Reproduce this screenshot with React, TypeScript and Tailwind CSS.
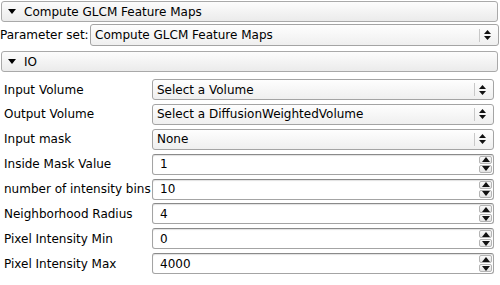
import React from "react";

const font = { fontFamily: '"DejaVu Sans", Verdana, sans-serif' };

function Caret() {
  return (
    <svg width="8" height="5" viewBox="0 0 8 5" className="shrink-0">
      <path d="M0 0 H8 L4 5 Z" fill="#000" />
    </svg>
  );
}

function Header({ title }: { title: string }) {
  return (
    <div className="h-[21px] flex items-center rounded-[3px] border border-[#a9a9a9] bg-gradient-to-b from-[#fcfcfc] to-[#ebebeb] pl-[6px] gap-[8px]">
      <Caret />
      <span className="text-[12px] text-black leading-none">{title}</span>
    </div>
  );
}

function ComboArrows() {
  return (
    <div className="flex items-center h-full">
      <div className="w-px h-[13px] bg-[#c8c8c8]" />
      <svg width="7" height="10" viewBox="0 0 7 10" className="ml-[4px] mr-[7px]">
        <path d="M0 4 L3.5 0 L7 4 Z" fill="#111" />
        <path d="M0 6 L7 6 L3.5 10 Z" fill="#111" />
      </svg>
    </div>
  );
}

function Combo({ value, h = "h-[21px]" }: { value: string; h?: string }) {
  return (
    <div
      className={`${h} flex-1 flex items-center justify-between rounded-[3px] border border-[#a4a4a4] bg-gradient-to-b from-[#fefefe] to-[#efefef] pl-[4px]`}
    >
      <span className="text-[12px] text-black leading-none">{value}</span>
      <ComboArrows />
    </div>
  );
}

function SpinButton({ up }: { up?: boolean }) {
  return (
    <div className="flex-1 flex items-center justify-center rounded-[2px] border border-[#b4b4b4] bg-gradient-to-b from-[#fafafa] to-[#e4e4e4]">
      <svg width="8" height="5" viewBox="0 0 8 5">
        {up ? <path d="M0 5 L4 0 L8 5 Z" fill="#111" /> : <path d="M0 0 H8 L4 5 Z" fill="#111" />}
      </svg>
    </div>
  );
}

function Spin({ value }: { value: string }) {
  return (
    <div className="h-[21px] flex-1 flex items-stretch justify-between rounded-[3px] border border-[#a4a4a4] border-t-[#8a8a8a] bg-white pl-[7px] shadow-[inset_0_1px_1px_rgba(0,0,0,0.12)]">
      <span className="self-center text-[12px] text-black leading-none">{value}</span>
      <div className="w-[14px] flex flex-col gap-px py-[1px] pr-[1px]">
        <SpinButton up />
        <SpinButton />
      </div>
    </div>
  );
}

type Row = { label: string; kind: "combo" | "spin"; value: string };

const rows: Row[] = [
  { label: "Input Volume", kind: "combo", value: "Select a Volume" },
  { label: "Output Volume", kind: "combo", value: "Select a DiffusionWeightedVolume" },
  { label: "Input mask", kind: "combo", value: "None" },
  { label: "Inside Mask Value", kind: "spin", value: "1" },
  { label: "number of intensity bins", kind: "spin", value: "10" },
  { label: "Neighborhood Radius", kind: "spin", value: "4" },
  { label: "Pixel Intensity Min", kind: "spin", value: "0" },
  { label: "Pixel Intensity Max", kind: "spin", value: "4000" },
];

export default function App() {
  return (
    <div className="w-[500px] h-[285px] bg-white overflow-hidden text-black" style={font}>
      <div className="pt-[1px] pl-[1px] pr-[2px]">
        <Header title="Compute GLCM Feature Maps" />
      </div>

      <div className="mt-[2px] flex items-center pr-[1px]">
        <span className="w-[90px] text-[12px] leading-none">Parameter set:</span>
        <Combo value="Compute GLCM Feature Maps" h="h-[22px]" />
      </div>

      <div className="mt-[5px] pl-[1px] pr-[2px]">
        <Header title="IO" />
      </div>

      <div className="mt-[7px] flex flex-col gap-[3.9px] pr-[6px]">
        {rows.map((r) => (
          <div key={r.label} className="flex items-center">
            <span className="w-[152px] pl-[4px] text-[12px] leading-none whitespace-nowrap">{r.label}</span>
            {r.kind === "combo" ? <Combo value={r.value} /> : <Spin value={r.value} />}
          </div>
        ))}
      </div>
    </div>
  );
}
